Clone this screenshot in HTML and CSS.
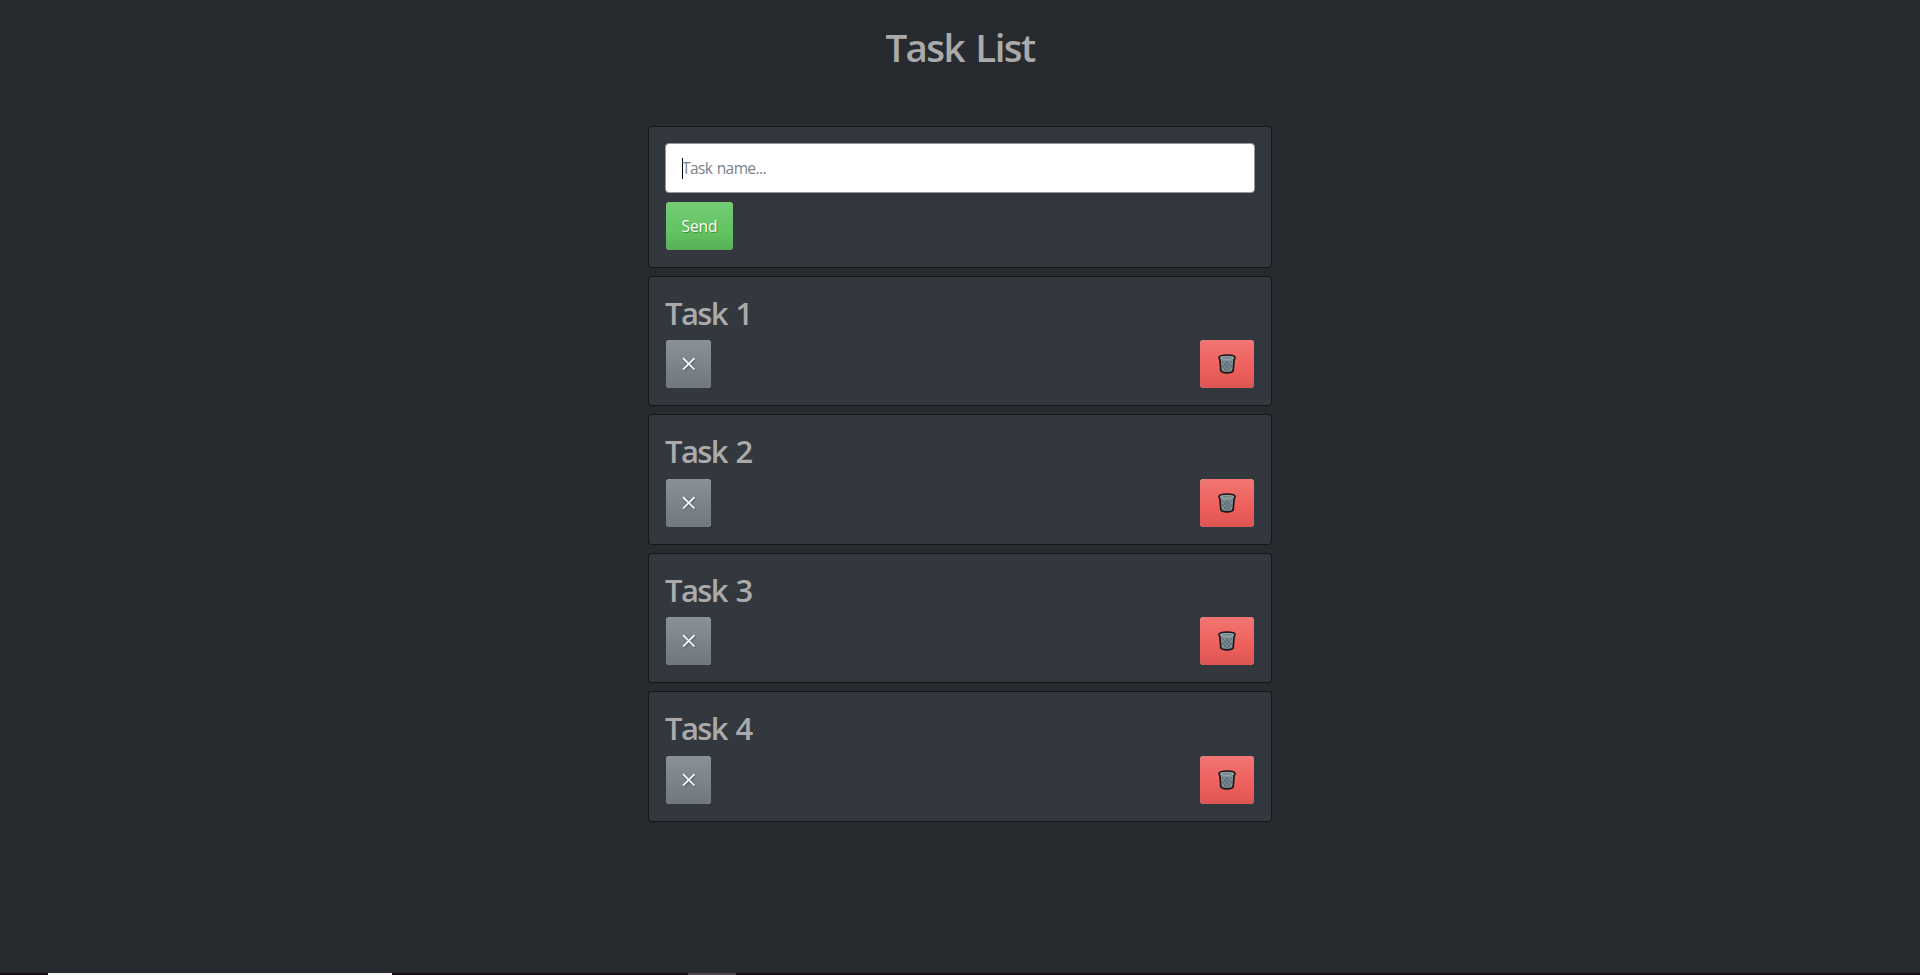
FILE: index.html
```html
<!DOCTYPE html>
<html lang="en">
<head>
<meta charset="utf-8">
<title>Task List</title>
<link rel="stylesheet" href="styles.css">
</head>
<body>
<svg class="defs" aria-hidden="true">
  <symbol id="cross" viewBox="0 0 14 14"><path d="M1.100 1.100L12.500 12.500M12.500 1.100L1.100 12.500" fill="none" stroke="#fff" stroke-width="1.600"/></symbol>
  <symbol id="bin" viewBox="0 0 18 20">
    <path d="M1 3.600C1 1.900 4 1.200 9 1.200s8 .7 8 2.400c0 .9-.3 1.500-.9 2L15.200 16.700C15 18.100 13 18.800 9 18.800s-6-.7-6.200-2.100L1.900 5.600C1.300 5.100 1 4.500 1 3.600z" fill="#7f9196" stroke="#1b1719" stroke-width="1.700"/>
    <path d="M4 7l8.500 9.500M7.500 7l6 6.500M3.800 11l6 6.500M14 7l-8.500 9.500M10.500 7l-6 6.500M14.200 11l-6 6.500" fill="none" stroke="#4b565c" stroke-width=".7"/>
    <ellipse cx="9" cy="3.800" rx="6.700" ry="1.400" fill="#73868a" stroke="#a3b1b2" stroke-width=".8"/>
  </symbol>
</svg>
<main class="page">
  <h1 class="title">Task List</h1>
  <form class="card form">
    <div class="field"><span class="caret"></span><span class="placeholder">Task name...</span></div>
    <button class="btn send" type="button"><span>Send</span></button>
  </form>
  <section class="card"><h2 class="name">Task 1</h2><div class="actions"><button class="btn toggle" type="button" aria-label="Toggle"><svg class="cross"><use href="#cross"/></svg></button><button class="btn delete" type="button" aria-label="Delete"><svg class="bin"><use href="#bin"/></svg></button></div></section>
  <section class="card"><h2 class="name">Task 2</h2><div class="actions"><button class="btn toggle" type="button" aria-label="Toggle"><svg class="cross"><use href="#cross"/></svg></button><button class="btn delete" type="button" aria-label="Delete"><svg class="bin"><use href="#bin"/></svg></button></div></section>
  <section class="card"><h2 class="name">Task 3</h2><div class="actions"><button class="btn toggle" type="button" aria-label="Toggle"><svg class="cross"><use href="#cross"/></svg></button><button class="btn delete" type="button" aria-label="Delete"><svg class="bin"><use href="#bin"/></svg></button></div></section>
  <section class="card"><h2 class="name">Task 4</h2><div class="actions"><button class="btn toggle" type="button" aria-label="Toggle"><svg class="cross"><use href="#cross"/></svg></button><button class="btn delete" type="button" aria-label="Delete"><svg class="bin"><use href="#bin"/></svg></button></div></section>
</main>
<footer class="strip"><span class="strip-light"></span><span class="strip-grey"></span></footer>
</body>
</html>
```
FILE: styles.css
```css
* { box-sizing: border-box; }
body {
  margin: 0;
  height: 975px;
  display: flex;
  flex-direction: column;
  justify-content: space-between;
  overflow: hidden;
  background: #272b30;
  color: #aaa;
  font: 16px/24px "Open Sans", "Noto Sans", sans-serif;
}
.defs { display: none; }
.page {
  width: 624px;
  margin: 0 auto;
  padding-top: 23px;
  display: flex;
  flex-direction: column;
  gap: 8px;
}
.title {
  margin: 0 0 47px;
  font-size: 38.5px;
  line-height: 48px;
  font-weight: 600;
  letter-spacing: -1.6px;
  word-spacing: 3px;
  text-align: center;
}
.card {
  border: 1px solid rgba(0, 0, 0, .6);
  border-radius: 4px;
  background: #32383e;
  padding: 16px;
}
.form {
  display: flex;
  flex-direction: column;
  align-items: flex-start;
  gap: 8px;
}
.field {
  width: 100%;
  height: 50px;
  display: flex;
  align-items: center;
  padding: 0 16px;
  background: #fff;
  border: 1px solid #9295a0;
  border-radius: 4px;
}
.caret { width: 1px; height: 21px; margin-right: -1px; background: #000; }
.placeholder { color: #7a8288; font-size: 15.5px; letter-spacing: -.6px; word-spacing: 1px; }
.btn {
  height: 50px;
  display: flex;
  align-items: center;
  justify-content: center;
  padding: 0;
  border: 1px solid transparent;
  background-clip: padding-box;
  border-radius: 5px;
  color: #fff;
  font: inherit;
  text-shadow: 1px 1px 1px rgba(0, 0, 0, .3);
}
.send {
  width: 69px;
  font-size: 15.5px;
  letter-spacing: -.1px;
  background-image: linear-gradient(#75cb75, #62c462 60%, #58b058);
}
.name {
  margin: 0;
  padding: 1px 0 7px;
  font-size: 31px;
  line-height: 38.4px;
  font-weight: 600;
  letter-spacing: -1.6px;
  word-spacing: 2px;
}
.actions { display: flex; justify-content: space-between; }
.toggle {
  width: 47px;
  background-image: linear-gradient(#8a9196, #7a8288 60%, #70777d);
}
.delete {
  width: 56px;
  background-image: linear-gradient(#f17673, #ee5f5b 60%, #dc5552);
}
.cross { width: 14px; height: 14px; filter: drop-shadow(1px 1px 1px rgba(0, 0, 0, .3)); }
.bin { width: 18px; height: 20px; }
.strip {
  height: 2px;
  display: flex;
  gap: 296px;
  padding-left: 48px;
  background: #140d14;
}
.strip-light { width: 344px; background: #f6f6f6; }
.strip-grey { width: 48px; background: #4d4b4f; }
```
